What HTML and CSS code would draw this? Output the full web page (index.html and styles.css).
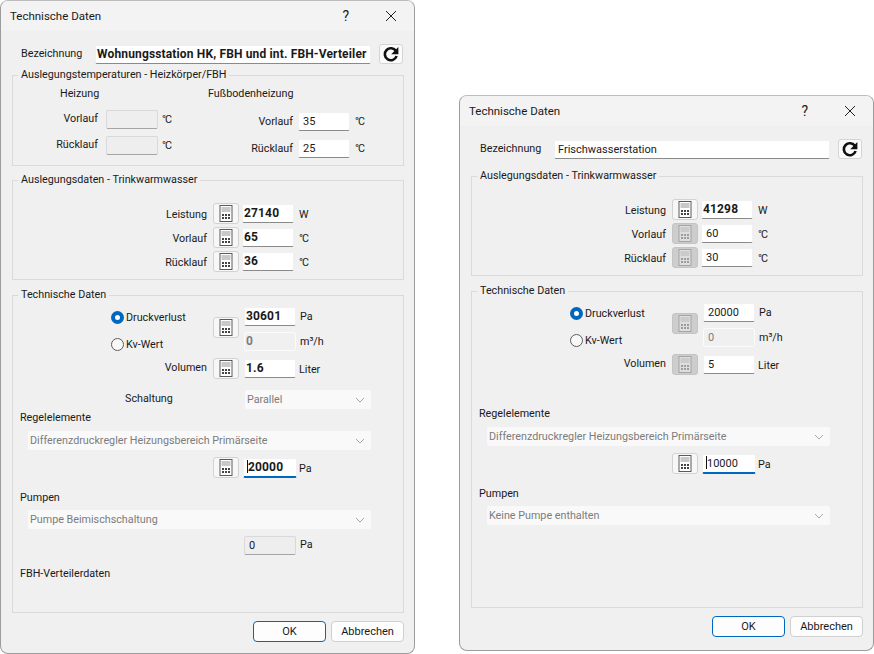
FILE: index.html
```html
<!DOCTYPE html>
<html lang="de">
<head>
    <meta charset="UTF-8">
    <title>Technische Daten</title>
    <link rel="stylesheet" href="styles.css">
</head>
<body>
    <svg class="defs" width="0" height="0">
        <symbol id="calc" viewBox="0 0 14 17">
            <rect class="calc-case" x="1" y="0.5" width="12" height="16"/>
            <rect class="calc-screen" x="2.5" y="2" width="9" height="5"/>
            <path class="calc-keys" d="M3 9h2v2H3zM6 9h2v2H6zM9 9h2v2H9zM3 12h2v2H3zM6 12h2v2H6zM9 12h2v2H9z"/>
        </symbol>
        <symbol id="refresh" viewBox="0 0 18 18">
            <path d="M14 6.2A6 6 0 1 0 14.6 11" fill="none" stroke="#111" stroke-width="2.6"/>
            <path d="M16.4 2v7.2H9.2z" fill="#111"/>
        </symbol>
        <symbol id="chevron" viewBox="0 0 10 6">
            <path d="M1 1l4 4 4-4" fill="none" stroke="#a8a8a8"/>
        </symbol>
    </svg>

    <div class="window window-left">
        <div class="titlebar">
            <span class="title">Technische Daten</span>
            <span class="help">?</span>
            <svg class="close" width="12" height="12" viewBox="0 0 12 12"><path d="M1 1l10 10M11 1L1 11" stroke="#222" fill="none"/></svg>
        </div>
        <div class="window-body">
            <div class="name-row">
                <span class="name-label">Bezeichnung</span>
                <div class="input bold name-input">Wohnungsstation HK, FBH und int. FBH-Verteiler</div>
                <button class="refresh"><svg width="18" height="18"><use href="#refresh"/></svg></button>
            </div>

            <fieldset class="group">
                <legend>Auslegungstemperaturen - Heizkörper/FBH</legend>
                <div class="temps">
                    <div class="temp-col temp-heating">
                        <div class="temp-heading">Heizung</div>
                        <div class="temp-row">
                            <span class="temp-label">Vorlauf</span>
                            <div class="input off"></div>
                            <span class="unit deg">°C</span>
                        </div>
                        <div class="temp-row">
                            <span class="temp-label">Rücklauf</span>
                            <div class="input off"></div>
                            <span class="unit deg">°C</span>
                        </div>
                    </div>
                    <div class="temp-col temp-floor">
                        <div class="temp-heading">Fußbodenheizung</div>
                        <div class="temp-row">
                            <span class="temp-label">Vorlauf</span>
                            <div class="input">35</div>
                            <span class="unit deg">°C</span>
                        </div>
                        <div class="temp-row">
                            <span class="temp-label">Rücklauf</span>
                            <div class="input">25</div>
                            <span class="unit deg">°C</span>
                        </div>
                    </div>
                </div>
            </fieldset>

            <fieldset class="group group-water">
                <legend>Auslegungsdaten - Trinkwarmwasser</legend>
                <div class="water">
                    <div class="field-row">
                        <span class="field-label">Leistung</span>
                        <button class="calc"><svg width="14" height="17"><use href="#calc"/></svg></button>
                        <div class="input bold tight">27140</div>
                        <span class="unit">W</span>
                    </div>
                    <div class="field-row">
                        <span class="field-label">Vorlauf</span>
                        <button class="calc"><svg width="14" height="17"><use href="#calc"/></svg></button>
                        <div class="input bold tight">65</div>
                        <span class="unit deg">°C</span>
                    </div>
                    <div class="field-row">
                        <span class="field-label">Rücklauf</span>
                        <button class="calc"><svg width="14" height="17"><use href="#calc"/></svg></button>
                        <div class="input bold tight">36</div>
                        <span class="unit deg">°C</span>
                    </div>
                </div>
            </fieldset>

            <fieldset class="group group-tech">
                <legend>Technische Daten</legend>
                <div class="tech">
                    <div class="pressure">
                        <div class="radios">
                            <div class="radio-row"><span class="radio checked"></span>Druckverlust</div>
                            <div class="radio-row"><span class="radio"></span>Kv-Wert</div>
                        </div>
                        <button class="calc"><svg width="14" height="17"><use href="#calc"/></svg></button>
                        <div class="pressure-fields">
                            <div class="pressure-line">
                                <div class="input bold">30601</div>
                                <span class="unit">Pa</span>
                            </div>
                            <div class="pressure-line">
                                <div class="input bold faded">0</div>
                                <span class="unit">m³/h</span>
                            </div>
                        </div>
                    </div>
                    <div class="field-row volume-row">
                        <span class="field-label">Volumen</span>
                        <button class="calc"><svg width="14" height="17"><use href="#calc"/></svg></button>
                        <div class="input bold">1.6</div>
                        <span class="unit">Liter</span>
                    </div>
                    <div class="switch-row">
                        <span class="switch-label">Schaltung</span>
                        <div class="select switch-select">Parallel<svg width="10" height="6"><use href="#chevron"/></svg></div>
                    </div>
                    <div class="section-label">Regelelemente</div>
                    <div class="select">Differenzdruckregler Heizungsbereich Primärseite<svg width="10" height="6"><use href="#chevron"/></svg></div>
                    <div class="field-row control-row">
                        <span class="field-label"></span>
                        <button class="calc"><svg width="14" height="17"><use href="#calc"/></svg></button>
                        <div class="input bold focused"><span class="caret"></span>20000</div>
                        <span class="unit">Pa</span>
                    </div>
                    <div class="section-label pump-label">Pumpen</div>
                    <div class="select">Pumpe Beimischschaltung<svg width="10" height="6"><use href="#chevron"/></svg></div>
                    <div class="pump-row">
                        <div class="input off">0</div>
                        <span class="unit">Pa</span>
                    </div>
                    <div class="section-label floor-label">FBH-Verteilerdaten</div>
                </div>
            </fieldset>

            <div class="footer">
                <button class="btn btn-primary">OK</button>
                <button class="btn">Abbrechen</button>
            </div>
        </div>
    </div>

    <div class="window window-right">
        <div class="titlebar">
            <span class="title">Technische Daten</span>
            <span class="help">?</span>
            <svg class="close" width="12" height="12" viewBox="0 0 12 12"><path d="M1 1l10 10M11 1L1 11" stroke="#222" fill="none"/></svg>
        </div>
        <div class="window-body">
            <div class="name-row">
                <span class="name-label">Bezeichnung</span>
                <div class="input name-input">Frischwasserstation</div>
                <button class="refresh"><svg width="18" height="18"><use href="#refresh"/></svg></button>
            </div>

            <fieldset class="group group-water">
                <legend>Auslegungsdaten - Trinkwarmwasser</legend>
                <div class="water">
                    <div class="field-row">
                        <span class="field-label">Leistung</span>
                        <button class="calc"><svg width="14" height="17"><use href="#calc"/></svg></button>
                        <div class="input bold tight">41298</div>
                        <span class="unit">W</span>
                    </div>
                    <div class="field-row">
                        <span class="field-label">Vorlauf</span>
                        <button class="calc calc-off"><svg width="14" height="17"><use href="#calc"/></svg></button>
                        <div class="input tight">60</div>
                        <span class="unit deg">°C</span>
                    </div>
                    <div class="field-row">
                        <span class="field-label">Rücklauf</span>
                        <button class="calc calc-off"><svg width="14" height="17"><use href="#calc"/></svg></button>
                        <div class="input tight">30</div>
                        <span class="unit deg">°C</span>
                    </div>
                </div>
            </fieldset>

            <fieldset class="group group-tech">
                <legend>Technische Daten</legend>
                <div class="tech tech-short">
                    <div class="pressure">
                        <div class="radios">
                            <div class="radio-row"><span class="radio checked"></span>Druckverlust</div>
                            <div class="radio-row"><span class="radio"></span>Kv-Wert</div>
                        </div>
                        <button class="calc calc-off"><svg width="14" height="17"><use href="#calc"/></svg></button>
                        <div class="pressure-fields">
                            <div class="pressure-line">
                                <div class="input">20000</div>
                                <span class="unit">Pa</span>
                            </div>
                            <div class="pressure-line">
                                <div class="input faded">0</div>
                                <span class="unit">m³/h</span>
                            </div>
                        </div>
                    </div>
                    <div class="field-row volume-row">
                        <span class="field-label">Volumen</span>
                        <button class="calc calc-off"><svg width="14" height="17"><use href="#calc"/></svg></button>
                        <div class="input">5</div>
                        <span class="unit">Liter</span>
                    </div>
                    <div class="section-label rule-label">Regelelemente</div>
                    <div class="select">Differenzdruckregler Heizungsbereich Primärseite<svg width="10" height="6"><use href="#chevron"/></svg></div>
                    <div class="field-row control-row">
                        <span class="field-label"></span>
                        <button class="calc"><svg width="14" height="17"><use href="#calc"/></svg></button>
                        <div class="input focused"><span class="caret"></span>10000</div>
                        <span class="unit">Pa</span>
                    </div>
                    <div class="section-label pump-label">Pumpen</div>
                    <div class="select">Keine Pumpe enthalten<svg width="10" height="6"><use href="#chevron"/></svg></div>
                </div>
            </fieldset>

            <div class="footer">
                <button class="btn btn-primary">OK</button>
                <button class="btn">Abbrechen</button>
            </div>
        </div>
    </div>
</body>
</html>
```

FILE: styles.css
```css
body{
    margin:0;
    height:654px;
    background-color:#fff;
    font-family:Roboto, "Noto Sans", sans-serif;
    font-size:10.75px;
    color:#1a1a1a;
    overflow:hidden;
    position:relative;
}
.defs{
    display:block;
    height:0;
}
.window{
    position:absolute;
    width:415px;
    box-sizing:border-box;
    border:1px solid #9c9c9c;
    border-top-color:#bdbdbd;
    border-radius:8px;
    background-color:#f0f0f0;
    overflow:hidden;
}
.window-left{
    left:0;
    top:0;
    height:654px;
}
.window-right{
    left:459px;
    top:95px;
    height:556px;
}
.titlebar{
    height:30px;
    display:flex;
    align-items:center;
    background-color:#f3f3f3;
    padding-left:9px;
}
.title{
    flex:1;
    font-size:11.5px;
}
.help{
    font-size:14px;
    margin-right:36px;
}
.close{
    margin-right:17px;
}
.window-body{
    padding:13px 10px 0 11px;
}
.name-row{
    display:flex;
    align-items:center;
    height:20px;
    padding-left:9px;
}
.name-label{
    width:74px;
    margin-bottom:2px;
}
.input{
    width:52px;
    height:19px;
    box-sizing:border-box;
    background-color:#fff;
    border:1px solid #f0f0f0;
    border-bottom-color:#8a8a8a;
    border-radius:2px;
    padding-left:4px;
    line-height:17px;
    font-size:11px;
    flex:none;
}
.bold{
    font-size:12px;
    font-weight:700;
    letter-spacing:.15px;
    padding-left:1px;
}
.name-input{
    width:276px;
    padding-left:1px;
}
.window-right .name-input{
    padding-left:3px;
}
.off{
    background-color:#eeeeee;
    border-color:#d9d9d9;
    border-bottom-color:#a5a5a5;
}
.faded{
    background-color:#f0f0f0;
    border-color:#fbfbfb;
    color:#7d7d7d;
}
.tight{
    margin-left:3px;
}
.refresh{
    width:24px;
    height:20px;
    margin-left:8px;
    padding:0;
    display:flex;
    align-items:center;
    justify-content:center;
    background-color:#fbfbfb;
    border:1px solid #d4d4d4;
    border-radius:3px;
}

.group{
    margin:3px 0 0;
    padding:0;
    min-width:0;
    border:1px solid #dadada;
}
.group legend{
    margin-left:5px;
    padding:0 3px;
    line-height:16px;
}
.group-water{
    margin-top:6px;
}
.window-right .group-water{
    margin-top:9px;
}
.group-tech{
    margin-top:7px;
}

.temps{
    display:flex;
    padding:3px 0 7px 7px;
}
.temp-col{
    display:flex;
    flex-direction:column;
}
.temp-heating{
    width:188px;
    gap:7px;
}
.temp-heading{
    line-height:16px;
}
.temp-heating .temp-heading{
    padding-left:40px;
    margin-bottom:1px;
}
.temp-floor{
    gap:8px;
}
.temp-floor .temp-heading{
    margin-bottom:2px;
}
.temp-row{
    display:flex;
    align-items:center;
    height:19px;
}
.temp-label{
    text-align:right;
    margin-bottom:3px;
}
.temp-heating .temp-label{
    width:78px;
    margin-right:8px;
}
.temp-floor .temp-label{
    width:85px;
    margin-right:5px;
}
.temp-floor .temp-label{
    margin-bottom:1px;
}
.unit{
    margin-left:5px;
}
.deg{
    letter-spacing:-1px;
}
.temp-heating .unit{
    margin-left:4px;
}

.water{
    display:flex;
    flex-direction:column;
    gap:3px;
    padding:15px 0 7px 7px;
}
.field-row{
    display:flex;
    align-items:center;
    height:21px;
}
.field-label{
    width:187px;
    text-align:right;
    flex:none;
    margin-top:2px;
}
.field-row .unit{
    margin-top:2px;
}
.calc{
    width:26px;
    height:21px;
    margin-left:6px;
    padding:0;
    display:flex;
    align-items:center;
    justify-content:center;
    background-color:#f7f7f7;
    border:1px solid #d2d2d2;
    border-radius:3px;
    flex:none;
}
.calc-case{
    fill:#fff;
    stroke:#5a5a5a;
}
.calc-screen{
    fill:#c9c9c9;
}
.calc-keys{
    fill:#444;
}
.calc-off{
    background-color:#cdcdcd;
    border-color:#c4c4c4;
}
.calc-off svg{
    opacity:.35;
}

.tech{
    padding:4px 0 29px 7px;
}
.tech-short{
    padding-bottom:82px;
}
.pressure{
    display:flex;
    align-items:flex-start;
}
.pressure .calc{
    margin-top:10px;
}
.radios{
    width:187px;
    box-sizing:border-box;
    padding:1px 0 0 91px;
    display:flex;
    flex-direction:column;
    gap:9px;
}
.radio-row{
    display:flex;
    align-items:center;
    height:18px;
}
.radio{
    width:13px;
    height:13px;
    box-sizing:border-box;
    border:1px solid #5c5c5c;
    border-radius:50%;
    background-color:#f8f8f8;
    margin-right:2px;
}
.radio.checked{
    border:4px solid #0067c0;
    background-color:#fff;
}
.pressure-fields{
    margin-left:5px;
    display:flex;
    flex-direction:column;
    gap:6px;
}
.pressure-line{
    display:flex;
    align-items:center;
}
.pressure-line .unit{
    margin-left:4px;
}
.volume-row{
    margin-top:5px;
}
.volume-row .field-label{
    margin:0 0 2px;
}
.volume-row .input{
    margin-left:5px;
}
.volume-row .unit{
    margin-left:3px;
}
.switch-row{
    display:flex;
    align-items:center;
    margin-top:11px;
    padding-left:105px;
}
.switch-label{
    width:120px;
    margin-bottom:3px;
}
.select{
    width:343px;
    height:19px;
    margin-left:8px;
    box-sizing:border-box;
    display:flex;
    align-items:center;
    justify-content:space-between;
    padding:0 6px 0 2px;
    background-color:#f9f9f9;
    color:#7c7c7c;
    border-radius:2px;
}
.switch-select{
    width:126px;
    margin-left:0;
}
.section-label{
    line-height:18px;
    margin-bottom:4px;
}
.rule-label{
    margin-top:30px;
}
.control-row{
    margin-top:7px;
}
.focused{
    width:54px;
    height:20px;
    margin-left:4px;
    padding-left:3px;
    border-bottom:2px solid #0067c0;
}
.focused + .unit{
    margin-left:2px;
}
.caret{
    display:inline-block;
    width:1px;
    height:13px;
    background-color:#111;
    vertical-align:-2px;
}
.pump-label{
    margin-top:11px;
    margin-bottom:3px;
}
.pump-row{
    display:flex;
    align-items:center;
    margin-top:7px;
    padding-left:224px;
}
.pump-row .unit{
    margin-left:4px;
    margin-bottom:3px;
}
.floor-label{
    margin-top:10px;
    margin-bottom:0;
}

.footer{
    display:flex;
    justify-content:flex-end;
    gap:5px;
    margin-top:8px;
}
.btn{
    width:73px;
    height:21px;
    padding:0;
    font-family:inherit;
    font-size:11px;
    color:#1a1a1a;
    background-color:#fdfdfd;
    border:1px solid #d0d0d0;
    border-radius:4px;
}
.btn-primary{
    border-color:#0067c0;
}
```
